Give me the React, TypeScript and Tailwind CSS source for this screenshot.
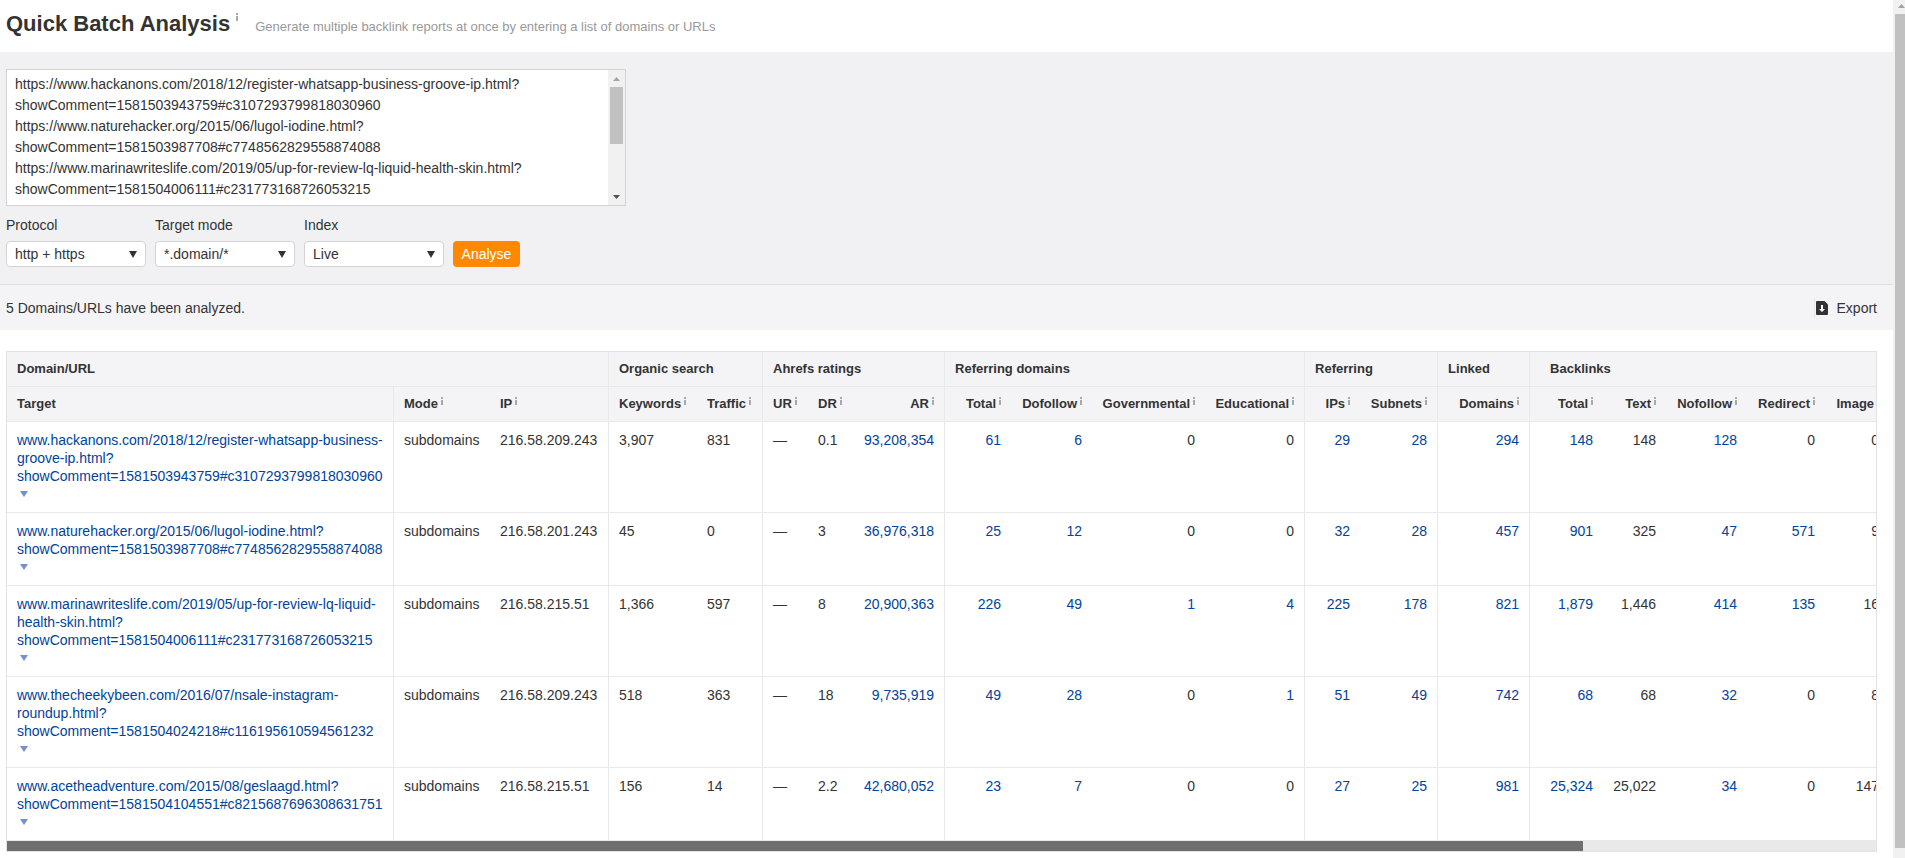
import { useState } from "react";
import clsx from "clsx";

type Column = {
  label: string;
  width: number;
  align?: "right";
  info?: boolean;
  last?: boolean;
};

const groups = [
  { label: "Domain/URL", span: 3 },
  { label: "Organic search", span: 2 },
  { label: "Ahrefs ratings", span: 3 },
  { label: "Referring domains", span: 4 },
  { label: "Referring", span: 2 },
  { label: "Linked", span: 1 },
  { label: "Backlinks", span: 5 },
];

// `last` marks the end of a column group, which gets a divider
const columns: Column[] = [
  { label: "Target", width: 387, last: true },
  { label: "Mode", width: 96, info: true },
  { label: "IP", width: 119, info: true, last: true },
  { label: "Keywords", width: 88, info: true },
  { label: "Traffic", width: 66, info: true, last: true },
  { label: "UR", width: 45, info: true },
  { label: "DR", width: 46, info: true },
  { label: "AR", width: 91, info: true, align: "right", last: true },
  { label: "Total", width: 66, info: true, align: "right" },
  { label: "Dofollow", width: 81, info: true, align: "right" },
  { label: "Governmental", width: 113, info: true, align: "right" },
  { label: "Educational", width: 100, info: true, align: "right", last: true },
  { label: "IPs", width: 55, info: true, align: "right" },
  { label: "Subnets", width: 78, info: true, align: "right", last: true },
  { label: "Domains", width: 92, info: true, align: "right", last: true },
  { label: "Total", width: 73, info: true, align: "right" },
  { label: "Text", width: 63, info: true, align: "right" },
  { label: "Nofollow", width: 81, info: true, align: "right" },
  { label: "Redirect", width: 78, info: true, align: "right" },
  { label: "Image", width: 64, info: true, align: "right" },
];

// Columns whose non-zero numbers link to a detailed report
const linked = [7, 8, 9, 10, 11, 12, 13, 14, 15, 17, 18];

const rows = [
  ["www.hackanons.com/2018/12/register-whatsapp-business-groove-ip.html?showComment=1581503943759#c3107293799818030960", "subdomains", "216.58.209.243", "3,907", "831", "—", "0.1", "93,208,354", "61", "6", "0", "0", "29", "28", "294", "148", "148", "128", "0", "0"],
  ["www.naturehacker.org/2015/06/lugol-iodine.html?showComment=1581503987708#c7748562829558874088", "subdomains", "216.58.201.243", "45", "0", "—", "3", "36,976,318", "25", "12", "0", "0", "32", "28", "457", "901", "325", "47", "571", "9"],
  ["www.marinawriteslife.com/2019/05/up-for-review-lq-liquid-health-skin.html?showComment=1581504006111#c231773168726053215", "subdomains", "216.58.215.51", "1,366", "597", "—", "8", "20,900,363", "226", "49", "1", "4", "225", "178", "821", "1,879", "1,446", "414", "135", "16"],
  ["www.thecheekybeen.com/2016/07/nsale-instagram-roundup.html?showComment=1581504024218#c116195610594561232", "subdomains", "216.58.209.243", "518", "363", "—", "18", "9,735,919", "49", "28", "0", "1", "51", "49", "742", "68", "68", "32", "0", "8"],
  ["www.acetheadventure.com/2015/08/geslaagd.html?showComment=1581504104551#c8215687696308631751", "subdomains", "216.58.215.51", "156", "14", "—", "2.2", "42,680,052", "23", "7", "0", "0", "27", "25", "981", "25,324", "25,022", "34", "0", "147"],
];

const InfoIcon = () => (
  <svg width="2" height="8" viewBox="0 0 2 8" className="inline-block shrink-0 fill-[#a9a9a9]">
    <path d="M0 0h2v2H0zM0 3h2v5H0z" />
  </svg>
);

const Triangle = ({ className, up }: { className: string; up?: boolean }) => (
  <svg viewBox="0 0 10 8" preserveAspectRatio="none" className={className} aria-hidden="true">
    <path d={up ? "M0 8h10L5 0z" : "M0 0h10L5 8z"} />
  </svg>
);

const SelectField = ({ id, label, options }: { id: string; label: string; options: string[] }) => (
  <div className="w-[140px]">
    <label htmlFor={id} className="block leading-5">
      {label}
    </label>
    <div className="relative mt-[6px]">
      <select
        id={id}
        className="block h-[26px] w-full appearance-none rounded-sm border border-[#d3d3d5] bg-white pl-2 pr-6"
      >
        {options.map((option) => (
          <option key={option}>{option}</option>
        ))}
      </select>
      <Triangle className="pointer-events-none absolute right-[9px] top-[10px] h-[7px] w-2 fill-[#333]" />
    </div>
  </div>
);

const ReportTable = () => (
  <div className="border border-[#e2e2e4]">
    <div className="overflow-hidden">
      <table className="w-[1882px] table-fixed border-separate border-spacing-0 leading-[18px]">
        <colgroup>
          {columns.map((column, i) => (
            <col key={i} style={{ width: column.width }} />
          ))}
        </colgroup>
        <thead className="bg-[#f4f4f7] text-[13px]">
          <tr>
            {groups.map((group, i) => (
              <th
                key={group.label}
                colSpan={group.span}
                scope="colgroup"
                className={clsx(
                  "h-[35px] border-b border-[#e9e9ea] pr-[10px] text-left font-bold",
                  i === groups.length - 1 ? "pl-5" : "border-r pl-[10px]"
                )}
              >
                {group.label}
              </th>
            ))}
          </tr>
          <tr>
            {columns.map((column, i) => (
              <th
                key={i}
                scope="col"
                className={clsx(
                  "h-[35px] border-b border-[#e9e9ea] px-[10px] font-bold",
                  column.last && "border-r"
                )}
              >
                <div className={clsx("flex gap-[3px]", column.align === "right" && "justify-end")}>
                  {column.label}
                  {column.info && (
                    <span className="flex pt-[2px]">
                      <InfoIcon />
                    </span>
                  )}
                </div>
              </th>
            ))}
          </tr>
        </thead>
        <tbody>
          {rows.map((row, r) => (
            <tr key={row[0]}>
              {row.map((value, c) => (
                <td
                  key={c}
                  className={clsx(
                    "border-[#e9e9ea] px-[10px] py-[9px] align-top",
                    r < rows.length - 1 && "border-b",
                    columns[c].last && "border-r",
                    columns[c].align === "right" && "text-right"
                  )}
                >
                  {c === 0 || (linked.includes(c) && value !== "0") ? (
                    <a href="#" className="text-[#00439c] hover:underline">
                      {value}
                    </a>
                  ) : (
                    value
                  )}
                  {c === 0 && (
                    <button type="button" aria-label="Show options" className="flex h-[18px] items-center pl-[3px]">
                      <Triangle className="h-[6px] w-2 fill-[#7590cc]" />
                    </button>
                  )}
                </td>
              ))}
            </tr>
          ))}
        </tbody>
      </table>
    </div>
    <div className="h-[11px] border-t border-[#e9e9ea] bg-[#e9e9e9]">
      <div className="h-full w-[84.3%] bg-[#6f6f6f]" />
    </div>
  </div>
);

const App = () => {
  const [urls, setUrls] = useState(rows.map((row) => "https://" + row[0]).join("\n"));

  return (
    <div className="flex min-h-screen bg-white font-['Liberation_Sans',Arial,sans-serif] text-sm text-[#333]">
      <main className="min-w-0 flex-1 pb-[5px]">
        <header className="flex h-[52px] items-start px-[6px] pt-[11px]">
          <h1 className="text-[22px] font-bold leading-[26px]">Quick Batch Analysis</h1>
          <span className="ml-[6px] flex pt-[2px]">
            <InfoIcon />
          </span>
          <p className="ml-[17px] pt-[6px] text-[13px] leading-5 text-[#999]">
            Generate multiple backlink reports at once by entering a list of domains or URLs
          </p>
        </header>

        <form
          className="border-b border-[#e0e0e2] bg-[#f1f1f4] px-[6px] pb-[17px] pt-[17px]"
          onSubmit={(e) => e.preventDefault()}
        >
          <div className="flex h-[137px] w-full max-w-[620px] border border-[#d3d3d5] bg-white">
            <textarea
              aria-label="Domains or URLs"
              value={urls}
              onChange={(e) => setUrls(e.target.value)}
              className="h-[130px] min-w-0 flex-1 resize-none overflow-hidden px-2 pt-1 leading-[21px] outline-none"
            />
            <div className="flex w-[17px] flex-col items-center justify-between bg-[#f1f1f1]">
              <div className="flex w-full flex-col items-center">
                <div className="flex h-[17px] items-center">
                  <Triangle up className="h-1 w-[7px] fill-[#a3a3a3]" />
                </div>
                <div className="h-[57px] w-[13px] bg-[#c1c1c1]" />
              </div>
              <div className="flex h-[17px] items-center">
                <Triangle className="h-1 w-[7px] fill-[#505050]" />
              </div>
            </div>
          </div>

          {/* Options */}
          <div className="mt-[9px] flex items-end gap-[9px]">
            <SelectField id="protocol" label="Protocol" options={["http + https", "http", "https"]} />
            <SelectField id="mode" label="Target mode" options={["*.domain/*", "domain/*", "URL"]} />
            <SelectField id="index" label="Index" options={["Live", "Recent", "Historical"]} />
            <button type="submit" className="h-[26px] w-[67px] rounded-sm bg-[#ff8800] text-white">
              Analyse
            </button>
          </div>
        </form>

        {/* Result summary */}
        <div className="flex h-[45px] items-center justify-between bg-[#f4f4f7] pl-[6px] pr-4">
          <p>5 Domains/URLs have been analyzed.</p>
          <button type="button" className="flex h-5 items-center border-l border-[#ebebee] pl-px">
            <svg width="12" height="14" viewBox="0 0 12 14" aria-hidden="true">
              <path d="M1 0h7.500l3.500 3.500V13a1 1 0 0 1-1 1H1a1 1 0 0 1-1-1V1a1 1 0 0 1 1-1z" fill="#333" />
              <path d="M5 4h2v4h2l-3 3-3-3h2z" fill="#fff" />
            </svg>
            <span className="ml-[9px]">Export</span>
          </button>
        </div>

        <div className="pl-[6px] pr-4 pt-[21px]">
          <ReportTable />
        </div>
      </main>

      {/* Page scrollbar */}
      <div className="flex w-3 flex-col overflow-hidden bg-[#f1f1f1] pb-[10px] pl-[2px]">
        <div className="h-[14px] shrink-0 pl-[3px] pt-1">
          <Triangle up className="h-1 w-[7px] fill-[#a3a3a3]" />
        </div>
        <div className="flex-1 bg-[#c1c1c1]" />
      </div>
    </div>
  );
};

export default App;
